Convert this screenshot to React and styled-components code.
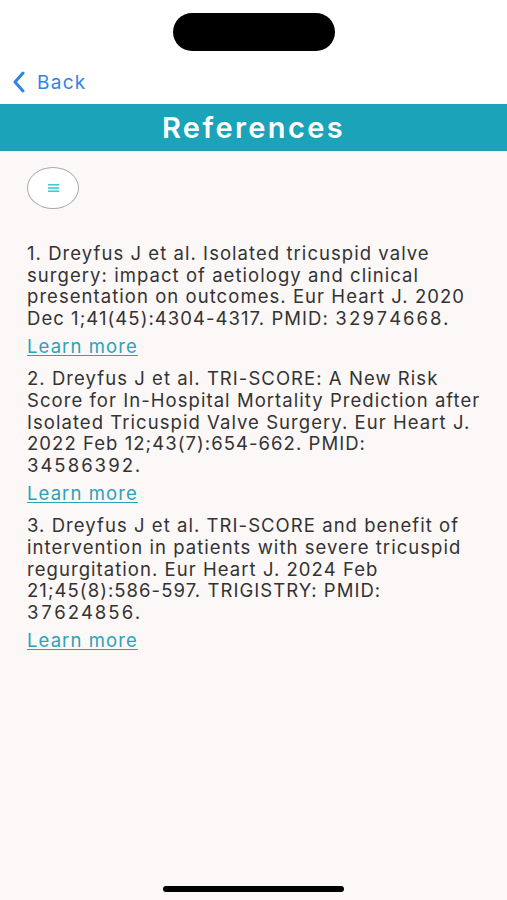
import React from 'react';
import styled, { createGlobalStyle } from 'styled-components';

const GlobalStyle = createGlobalStyle`
    html, body {
        margin: 0;
        padding: 0;
        background: #fcf8f7;
    }
    body {
        font-family: Inter, 'Liberation Sans', Arial, sans-serif;
    }
`;

const Screen = styled.div`
    width: 507px;
    min-height: 900px;
    display: flex;
    flex-direction: column;
    background: #fcf8f7;
`;

const StatusArea = styled.div`
    height: 60px;
    display: flex;
    justify-content: center;
    align-items: flex-start;
    padding-top: 13px;
    box-sizing: border-box;
    background: #ffffff;
`;

const Island = styled.div`
    width: 162px;
    height: 38px;
    border-radius: 19px;
    background: #000000;
`;

const NavBar = styled.div`
    height: 44px;
    display: flex;
    align-items: center;
    padding-left: 12px;
    background: #ffffff;
`;

const BackButton = styled.button`
    display: flex;
    align-items: center;
    gap: 11px;
    border: none;
    background: none;
    padding: 0;
    color: #2f84e6;
    font-family: Inter, 'Liberation Sans', Arial, sans-serif;
    font-size: 19px;
    letter-spacing: 1.3px;
    cursor: pointer;
`;

const TitleBar = styled.div`
    height: 47px;
    display: flex;
    align-items: center;
    justify-content: center;
    background: #1ba3b9;
    color: #ffffff;
    font-size: 29px;
    font-weight: 600;
    letter-spacing: 2.4px;
`;

const Content = styled.div`
    display: flex;
    flex-direction: column;
    padding: 16px 26px 0 27px;
`;

const MenuButton = styled.button`
    width: 52px;
    height: 42px;
    border-radius: 50%;
    border: 1.5px solid #a9a9a9;
    background: #ffffff;
    display: flex;
    align-items: center;
    justify-content: center;
    padding: 0;
    margin-bottom: 34px;
    cursor: pointer;
`;

const RefList = styled.div`
    display: flex;
    flex-direction: column;
    gap: 9px;
`;

const RefItem = styled.div`
    display: flex;
    flex-direction: column;
    gap: 4px;
`;

const RefText = styled.p`
    margin: 0;
    font-size: 18.5px;
    line-height: 21.6px;
    letter-spacing: 1.05px;
    color: #333333;
`;

const Pmid = styled.span`
    font-variant-numeric: tabular-nums;
    letter-spacing: 1.5px;
`;

const LearnMore = styled.a`
    font-size: 18.5px;
    line-height: 26px;
    letter-spacing: 1.1px;
    color: #2aa3b9;
    text-decoration: underline;
    text-underline-offset: 2px;
    align-self: flex-start;
    cursor: pointer;
`;

const HomeBar = styled.div`
    margin-top: auto;
    display: flex;
    justify-content: center;
    padding-bottom: 8px;
`;

const HomeIndicator = styled.div`
    width: 181px;
    height: 6px;
    border-radius: 3px;
    background: #000000;
`;

const references = [
    {
        text: '1. Dreyfus J et al. Isolated tricuspid valve surgery: impact of aetiology and clinical presentation on outcomes. Eur Heart J. 2020 Dec 1;41(45):4304-4317. PMID:',
        pmid: '32974668.',
    },
    {
        text: '2. Dreyfus J et al. TRI-SCORE: A New Risk Score for In-Hospital Mortality Prediction after Isolated Tricuspid Valve Surgery. Eur Heart J. 2022 Feb 12;43(7):654-662. PMID:',
        pmid: '34586392.',
    },
    {
        text: '3. Dreyfus J et al. TRI-SCORE and benefit of intervention in patients with severe tricuspid regurgitation. Eur Heart J. 2024 Feb 21;45(8):586-597. TRIGISTRY: PMID:',
        pmid: '37624856.',
    },
];

const App = () => {
    return (
        <Screen>
            <GlobalStyle />
            <StatusArea>
                <Island />
            </StatusArea>
            <NavBar>
                <BackButton>
                    <svg width="14" height="22" viewBox="0 0 14 22">
                        <path
                            d="M11 2 L3 11 L11 20"
                            fill="none"
                            stroke="#2f84e6"
                            strokeWidth="3"
                            strokeLinecap="round"
                            strokeLinejoin="round"
                        />
                    </svg>
                    Back
                </BackButton>
            </NavBar>
            <TitleBar>References</TitleBar>
            <Content>
                <MenuButton>
                    <svg width="11" height="8" viewBox="0 0 11 8">
                        <rect x="0" y="0" width="11" height="1.6" fill="#3fcdd3" />
                        <rect x="0" y="3.2" width="11" height="1.6" fill="#3fcdd3" />
                        <rect x="0" y="6.4" width="11" height="1.6" fill="#3fcdd3" />
                    </svg>
                </MenuButton>
                <RefList>
                    {references.map((ref) => (
                        <RefItem key={ref.pmid}>
                            <RefText>
                                {ref.text} <Pmid>{ref.pmid}</Pmid>
                            </RefText>
                            <LearnMore>Learn more</LearnMore>
                        </RefItem>
                    ))}
                </RefList>
            </Content>
            <HomeBar>
                <HomeIndicator />
            </HomeBar>
        </Screen>
    );
};

export default App;
